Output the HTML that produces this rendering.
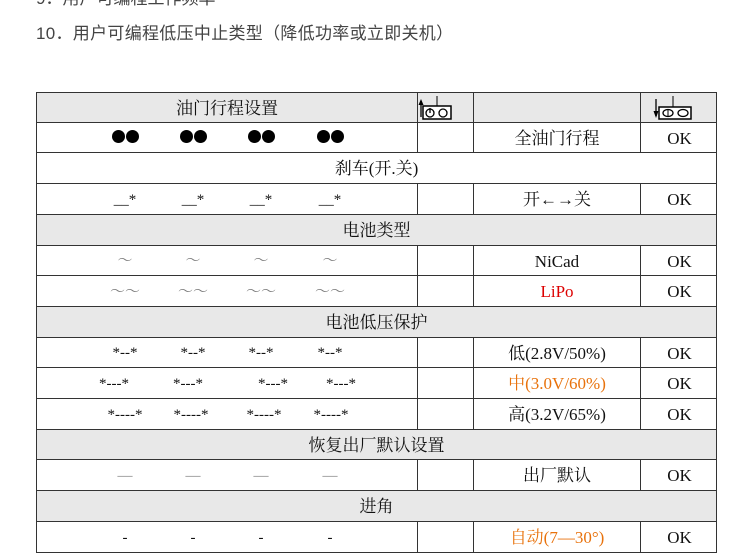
<!DOCTYPE html>
<html><head><meta charset="utf-8"><style>
body{margin:0;width:750px;height:542px;overflow:hidden;background:#fff;font-family:"Liberation Serif","Noto Serif CJK SC",serif;color:#111;position:relative}
.t{position:absolute;left:36px;top:19px;font:17px "Liberation Sans","Noto Sans CJK SC",sans-serif;color:#444;letter-spacing:0.3px}
.t0{position:absolute;left:36px;top:-16px;font:17px "Liberation Sans","Noto Sans CJK SC",sans-serif;color:#444}
.r{position:absolute;left:36px;width:681px;box-sizing:border-box;border:1.5px solid #333;border-top:none;}
.c{position:absolute;top:0;bottom:0;border-right:1.5px solid #333;box-sizing:border-box;text-align:center;font-size:17px;padding-top:2px}
.g{background:#e8e8e8}
.it{position:absolute;transform:translateX(-50%);white-space:nowrap;font-size:15px}
.dot{display:inline-block;width:13px;height:13px;border-radius:50%;background:#000;margin:0 0.5px;vertical-align:middle}
</style></head><body>
<div class="t0">9．用户可编程工作频率</div>
<div class="t">10．用户可编程低压中止类型（降低功率或立即关机）</div>
<div id="tbl"></div>
<script>
var D='<span class="dot"></span><span class="dot"></span>';
var tops=[92,122.5,153,184,215,245.5,276,307,337.5,368,399,430,460,491,522,553];
var rows=[
['h'],['d',[D,D,D,D],'全油门行程','OK',{top:0}],
['f','刹车(开.关)',false],['d',['__*','__*','__*','__*'],'开←→关','OK'],
['f','电池类型',true],['d',['～','～','～','～'],'NiCad','OK',{col:'#777'}],
['d',['～～','～～','～～','～～'],'<span style="color:#d00">LiPo</span>','OK',{col:'#777'}],
['f','电池低压保护',true],['d',['*--*','*--*','*--*','*--*'],'低(2.8V/50%)','OK'],
['d',['*---*','*---*','*---*','*---*'],'<span style="color:#e8720c">中(3.0V/60%)</span>','OK',{off:[-11,-5,12,11]}],
['d',['*----*','*----*','*----*','*----*'],'高(3.2V/65%)','OK',{off:[0,-2,3,1]}],
['f','恢复出厂默认设置',true],['d',['—','—','—','—'],'出厂默认','OK',{col:'#888'}],
['f','进角',true],['d',['-','-','-','-'],'<span style="color:#e8720c">自动(7—30°)</span>','OK']];
var xs=[124-36,192-36,260-36,329-36];var h='';
rows.forEach(function(r,i){var top=tops[i],ht=tops[i+1]-top;var lh=ht-3;
var bt=i==0?'border-top:1.5px solid #333;':'';
if(r[0]=='h'){h+='<div class="r g" style="top:'+top+'px;height:'+ht+'px;'+bt+'">'+
'<div class="c" style="left:0;width:381px;line-height:'+lh+'px">油门行程设置</div>'+
'<div class="c" style="left:381px;width:56px;padding:0"><svg width="56" height="30"><line x1="3" y1="8" x2="3" y2="24" stroke="#000" stroke-width="1.3"/><path d="M0.5 12L3 6L5.5 12z"/><rect x="5" y="13" width="28" height="13" fill="#fff" stroke="#000" stroke-width="1.5"/><line x1="19" y1="3" x2="19" y2="13" stroke="#000"/><circle cx="12" cy="20" r="4" fill="none" stroke="#000" stroke-width="1.3"/><line x1="12" y1="15" x2="12" y2="20" stroke="#000" stroke-width="1.3"/><circle cx="25" cy="20" r="4" fill="none" stroke="#000" stroke-width="1.3"/></svg></div>'+
'<div class="c" style="left:437px;width:167px"></div>'+
'<div class="c" style="left:604px;width:77px;border-right:none;padding:0"><svg width="76" height="30"><line x1="14" y1="6" x2="14" y2="23" stroke="#000" stroke-width="1.3"/><path d="M11.5 18L14 25L16.5 18z"/><rect x="17" y="14" width="32" height="12" fill="#fff" stroke="#000" stroke-width="1.5"/><line x1="31" y1="3" x2="31" y2="14" stroke="#000"/><ellipse cx="26" cy="20" rx="5" ry="3.5" fill="none" stroke="#000" stroke-width="1.3"/><line x1="26" y1="17" x2="26" y2="24" stroke="#000"/><ellipse cx="41" cy="20" rx="5" ry="3.5" fill="none" stroke="#000" stroke-width="1.3"/></svg></div></div>';}
else if(r[0]=='f'){h+='<div class="r'+(r[2]?' g':'')+'" style="top:'+top+'px;height:'+ht+'px;text-align:center;padding-top:2px;box-sizing:border-box;line-height:'+lh+'px;font-size:17px">'+r[1]+'</div>';}
else{var o=r[4]||{};var its='';r[1].forEach(function(s,k){its+='<span class="it" style="left:'+(xs[k]+(o.off?o.off[k]:0))+'px;top:'+(o.top!=null?o.top:2)+'px;line-height:'+lh+'px;'+(o.col?'color:'+o.col+';':'')+'">'+s+'</span>';});
h+='<div class="r" style="top:'+top+'px;height:'+ht+'px">'+
'<div class="c" style="left:0;width:381px">'+its+'</div>'+
'<div class="c" style="left:381px;width:56px"></div>'+
'<div class="c" style="left:437px;width:167px;line-height:'+lh+'px">'+r[2]+'</div>'+
'<div class="c" style="left:604px;width:77px;border-right:none;line-height:'+lh+'px">'+r[3]+'</div></div>';}
});
document.getElementById('tbl').innerHTML=h;
</script>
</body></html>
